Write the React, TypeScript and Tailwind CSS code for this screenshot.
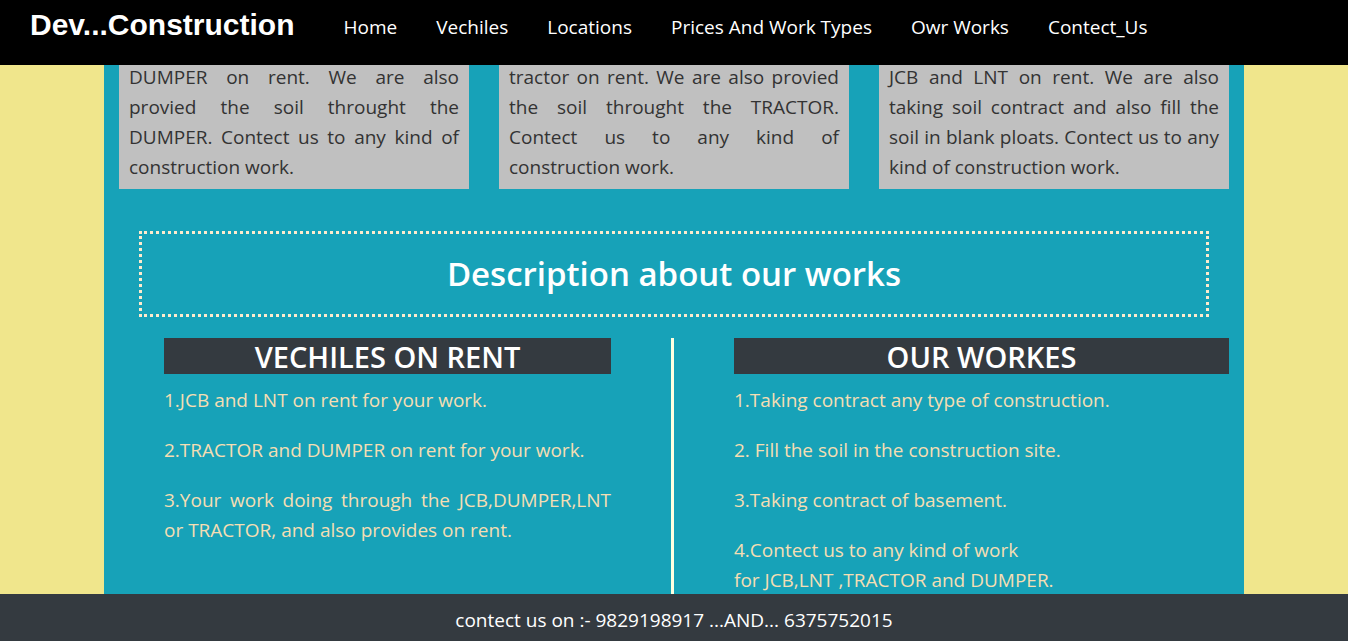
import React from "react";

const cards = [
  "DUMPER on rent. We are also provied the soil throught the DUMPER. Contect us to any kind of construction work.",
  "tractor on rent. We are also provied the soil throught the TRACTOR. Contect us to any kind of construction work.",
  "JCB and LNT on rent. We are also taking soil contract and also fill the soil in blank ploats. Contect us to any kind of construction work.",
];

export default function App() {
  return (
    <div className="h-[641px] flex flex-col overflow-hidden bg-[#f0e68c] font-['Open_Sans',sans-serif]">
      <header className="h-[65px] shrink-0 bg-black flex items-start relative z-10">
        <div className="ml-[30px] mt-[8px] leading-[34px] text-[30px] font-bold text-white font-['Liberation_Sans',Arial,sans-serif]">
          Dev...Construction
        </div>
        <nav className="ml-[49px] mt-[13px] flex gap-[39px] text-white text-[19px] leading-[28px]">
          <span>Home</span>
          <span>Vechiles</span>
          <span>Locations</span>
          <span>Prices And Work Types</span>
          <span>Owr Works</span>
          <span>Contect_Us</span>
        </nav>
      </header>

      <main className="flex-1 min-h-0 overflow-hidden">
        <div className="mx-auto w-[1140px] h-full bg-[#17a2b8] flex flex-col">
          <div className="mt-[-3px] px-[15px] flex gap-[30px]">
            {cards.map((t, i) => (
              <div key={i} className="w-[350px] bg-[#c0c0c0] px-[10px] pb-[7px] text-[#333] text-[19px] leading-[30px] text-justify">
                {t}
              </div>
            ))}
          </div>

          <div className="mt-[42px] mx-[35px] h-[86px] border-[3px] border-dotted border-[#ffebcd] flex items-center justify-center">
            <h2 className="text-white text-[33px] font-semibold leading-[40px]">Description about our works</h2>
          </div>

          <div className="mt-[21px] flex flex-1 min-h-0">
            <div className="ml-[60px] w-[447px]">
              <div className="h-[36px] bg-[#343a40] text-white text-[29px] font-semibold leading-[38px] text-center">VECHILES ON RENT</div>
              <div className="mt-[11px] text-[#f5deb3] text-[19px] leading-[30px] text-justify">
                <p className="mb-[20px]">1.JCB and LNT on rent for your work.</p>
                <p className="mb-[20px]">2.TRACTOR and DUMPER on rent for your work.</p>
                <p className="mb-[20px]">3.Your work doing through the JCB,DUMPER,LNT or TRACTOR, and also provides on rent.</p>
              </div>
            </div>
            <div className="ml-[60px] w-[3px] bg-[#ffffe0] h-[400px]" />
            <div className="ml-[60px] w-[495px]">
              <div className="h-[36px] bg-[#343a40] text-white text-[29px] font-semibold leading-[38px] text-center">OUR WORKES</div>
              <div className="mt-[11px] text-[#f5deb3] text-[19px] leading-[30px]">
                <p className="mb-[20px]">1.Taking contract any type of construction.</p>
                <p className="mb-[20px]">2. Fill the soil in the construction site.</p>
                <p className="mb-[20px]">3.Taking contract of basement.</p>
                <p className="mb-[20px]">4.Contect us to any kind of work<br />for JCB,LNT ,TRACTOR and DUMPER.</p>
              </div>
            </div>
          </div>
        </div>
      </main>

      <footer className="h-[47px] shrink-0 bg-[#343a40] flex items-center justify-center text-white text-[19px] leading-[26px] pt-[5px]">
        contect us on :- 9829198917 ...AND... 6375752015
      </footer>
    </div>
  );
}
